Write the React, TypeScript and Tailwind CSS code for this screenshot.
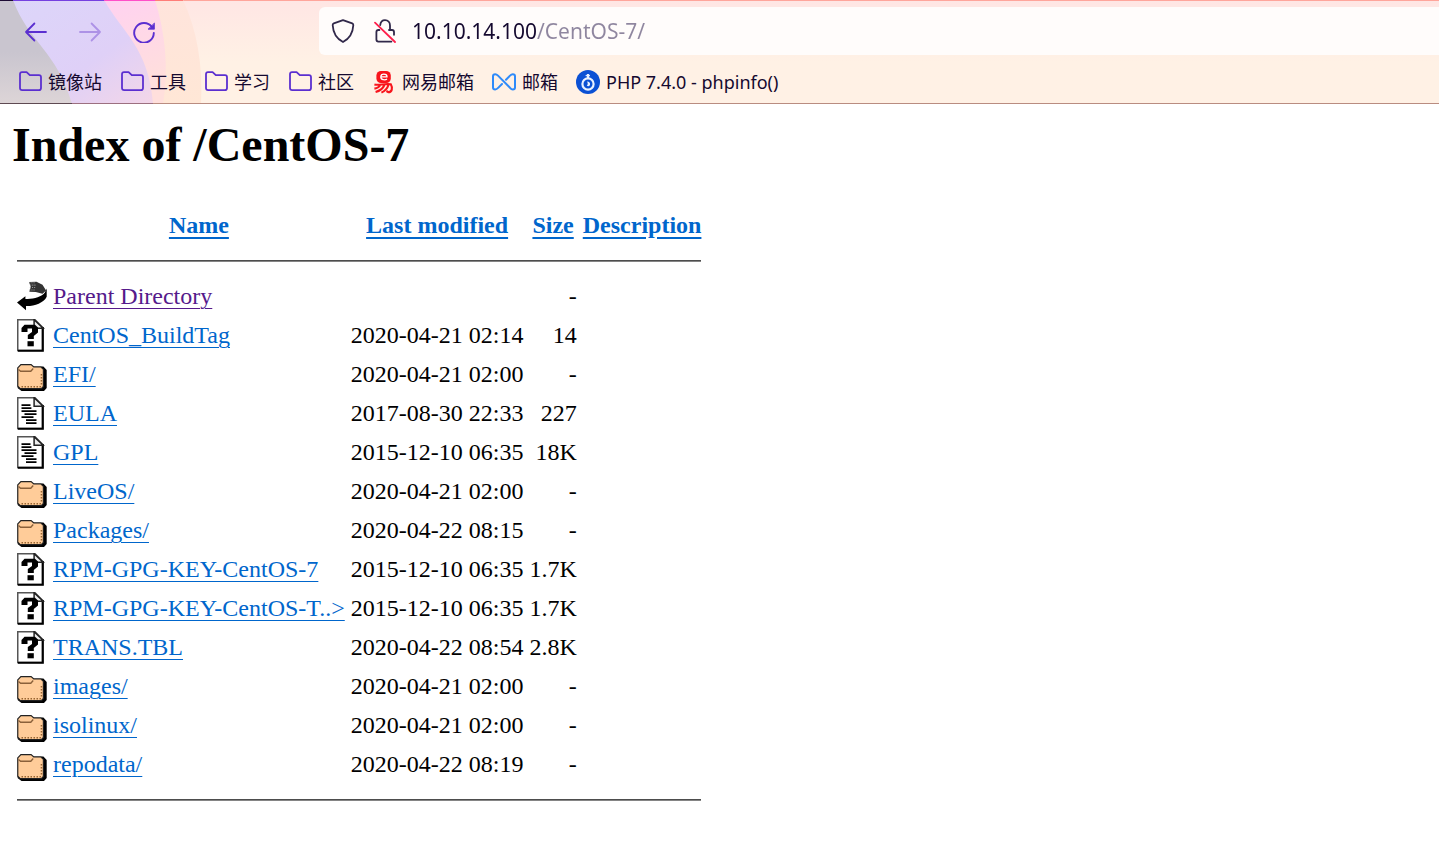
import React, { useState } from "react";

type Kind = "back" | "unknown" | "folder" | "text";

interface Entry {
  kind: Kind;
  name: string;
  modified: string;
  size: string;
}

const entries: Entry[] = [
  { kind: "back", name: "Parent Directory", modified: "", size: "-" },
  { kind: "unknown", name: "CentOS_BuildTag", modified: "2020-04-21 02:14", size: "14" },
  { kind: "folder", name: "EFI/", modified: "2020-04-21 02:00", size: "-" },
  { kind: "text", name: "EULA", modified: "2017-08-30 22:33", size: "227" },
  { kind: "text", name: "GPL", modified: "2015-12-10 06:35", size: "18K" },
  { kind: "folder", name: "LiveOS/", modified: "2020-04-21 02:00", size: "-" },
  { kind: "folder", name: "Packages/", modified: "2020-04-22 08:15", size: "-" },
  { kind: "unknown", name: "RPM-GPG-KEY-CentOS-7", modified: "2015-12-10 06:35", size: "1.7K" },
  { kind: "unknown", name: "RPM-GPG-KEY-CentOS-T..>", modified: "2015-12-10 06:35", size: "1.7K" },
  { kind: "unknown", name: "TRANS.TBL", modified: "2020-04-22 08:54", size: "2.8K" },
  { kind: "folder", name: "images/", modified: "2020-04-21 02:00", size: "-" },
  { kind: "folder", name: "isolinux/", modified: "2020-04-21 02:00", size: "-" },
  { kind: "folder", name: "repodata/", modified: "2020-04-22 08:19", size: "-" },
];

function Sheet({ children }: { children: React.ReactNode }) {
  return (
    <>
      <path d="M0.5 0.5H12L17 5.6V21H0.5Z" fill="#fff" stroke="#555" strokeWidth="1" />
      <path d="M0.6 21.2H17.2V5.4" fill="none" stroke="#000" strokeWidth="1.4" />
      <path d="M11.4 0.4V6.2H17.4Z" fill="#eee" stroke="#222" strokeWidth="1" />
      {children}
    </>
  );
}

function FileIcon({ kind }: { kind: Kind }) {
  return (
    <svg className="block h-[33px] w-[30px]" viewBox="0 0 20 22" aria-hidden="true">
      {kind === "unknown" && (
        <Sheet>
          <path d="M3 8.6V6L5 3.8H12L14 5.6V9L11.2 11.4V13.4H7.2V10.6L10 8.6V6.4H7V8.6Z" fill="#000" />
          <path d="M7 14.8H11.2V18.2H7Z" fill="#000" />
        </Sheet>
      )}
      {kind === "text" && (
        <Sheet>
          <path d="M3 5.4H9M3 7.4H9.6M3 9.4H13M5 11.4H13M3 13.4H11M6 15.4H13M6 17.4H13" stroke="#000" strokeWidth="1.2" />
        </Sheet>
      )}
      {kind === "folder" && (
        <>
          <path d="M2 5.6H17.6L19.8 8V20L18 22H3L0.4 20Z" fill="#000" />
          <path d="M0.5 6.6L2.6 4.4H9.4L11.2 6H16L17.6 7.6V19L16.2 20.4H2.2L0.5 18.8Z" fill="#ffcc99" stroke="#222" strokeWidth="0.8" />
          <path d="M1 7.6L2.4 8.8H9.2L10.8 7" fill="none" stroke="#8a603a" strokeWidth="0.9" />
          <path d="M3 19.1H16M16.3 10.6V18.6" fill="none" stroke="#996633" strokeWidth="1" strokeDasharray="1 1" />
        </>
      )}
      {kind === "back" && (
        <>
          <path d="M8 1.4L13 1.2L17 3.2L19.4 7L17 9.2L12.5 8L8.2 7.8L9.2 4.6Z" fill="#333" />
          <path d="M8.2 1.8H12M8.8 3.4H13M8.6 5H12.6M8.2 6.6H12" stroke="#999" strokeWidth="0.7" strokeDasharray="0.7 0.7" />
          <path d="M0 15L5.6 10.8V12.6C10.5 13 16.4 11.4 18.6 8.4L19.8 5.6V11.2C17.8 15.4 11.4 17.6 6 17.4V20.2Z" fill="#000" />
        </>
      )}
    </svg>
  );
}

function BookmarkFolder() {
  return (
    <svg className="h-6 w-6 shrink-0" viewBox="0 0 24 24" fill="none" stroke="#5b2fd0" strokeWidth="1.8" strokeLinejoin="round" aria-hidden="true">
      <path d="M2 4.2Q2 2.2 4 2.2H8.6L11.8 5.2H21Q23 5.2 23 7.2V18Q23 20.2 20.8 20.2H4.2Q2 20.2 2 18Z" />
    </svg>
  );
}

function NetEaseIcon() {
  return (
    <svg className="h-6 w-6 shrink-0" viewBox="0 0 24 24" fill="none" stroke="#f8141c" aria-hidden="true">
      <rect x="4.4" y="1" width="14.4" height="12" rx="4.6" fill="#f8141c" stroke="none" />
      <path d="M8.4 6.8H15C15 3.4 8.8 3.2 8.8 7C8.8 10.2 13.4 10.4 15 9" stroke="#fff" strokeWidth="1.3" />
      <path d="M2.4 14.4C7 15.8 12 13.2 18.8 14.2C21 18 20 22.2 16.4 22.2L14.4 21M8.4 14.6C7.4 17 5.2 18.2 2.4 18.6M12.4 15C11 18.4 8 20.8 3.6 22M16.4 15C15.4 18.4 13 21 9.4 22.6" strokeWidth="2.1" />
    </svg>
  );
}

function MailIcon() {
  return (
    <svg className="h-6 w-6 shrink-0" viewBox="0 0 24 24" fill="none" stroke="#2f8bfa" strokeWidth="2" strokeLinejoin="round" strokeLinecap="round" aria-hidden="true">
      <path d="M10 14L6.4 17.6Q4.6 19.4 3.2 19.4Q1 19.4 1 17.4V6.2Q1 4.2 3.2 4.2Q4.6 4.2 6 5.6L18 17.8Q19.4 19.4 20.8 19.4Q23 19.4 23 17.4V6.2Q23 4.2 20.8 4.2Q19.4 4.2 18 5.6L14 9.8" />
    </svg>
  );
}

function PhpSiteIcon() {
  return (
    <svg className="h-6 w-6 shrink-0" viewBox="0 0 24 24" fill="none" aria-hidden="true">
      <circle cx="12" cy="12" r="12" fill="#0b50d4" />
      <circle cx="12" cy="14" r="5.6" stroke="#e8f0ff" strokeWidth="2.2" />
      <path d="M12 4V9" stroke="#e8f0ff" strokeWidth="2.4" />
      <path d="M9.6 5.6H14" stroke="#e8f0ff" strokeWidth="1" />
      <path d="M11 11.6Q14.6 12 14 15Q12.6 17 10.8 15.6Q12.6 14 11 11.6Z" fill="#e8f0ff" />
    </svg>
  );
}

const bookmarks = [
  { label: "镜像站", icon: <BookmarkFolder /> },
  { label: "工具", icon: <BookmarkFolder /> },
  { label: "学习", icon: <BookmarkFolder /> },
  { label: "社区", icon: <BookmarkFolder /> },
  { label: "网易邮箱", icon: <NetEaseIcon /> },
  { label: "邮箱", icon: <MailIcon /> },
  { label: "PHP 7.4.0 - phpinfo()", icon: <PhpSiteIcon /> },
];

function ThemeArt() {
  return (
    <svg className="absolute top-0 left-0 h-[104px] w-[210px]" viewBox="0 0 210 104" aria-hidden="true">
      <defs>
        <linearGradient id="peach" x1="0" y1="0" x2="0" y2="1">
          <stop offset="0" stopColor="#ffe4dc" />
          <stop offset="1" stopColor="#ffe7d6" />
        </linearGradient>
        <linearGradient id="pink" x1="0" y1="0" x2="0.5" y2="1">
          <stop offset="0" stopColor="#ffcdf8" />
          <stop offset="1" stopColor="#ffdfdc" />
        </linearGradient>
        <linearGradient id="violet" x1="0" y1="0" x2="1" y2="1">
          <stop offset="0" stopColor="#dcd6fa" />
          <stop offset="0.6" stopColor="#dfd0f7" />
          <stop offset="1" stopColor="#f3d6e8" />
        </linearGradient>
        <linearGradient id="gray" x1="0" y1="0" x2="0" y2="1">
          <stop offset="0.5" stopColor="#c9c5cf" />
          <stop offset="1" stopColor="#ddd5d7" />
        </linearGradient>
      </defs>
      <path d="M0 0H183C197 30 203 65 201 104H0Z" fill="url(#peach)" />
      <path d="M0 0H155C165 32 169 68 163 104H0Z" fill="url(#pink)" />
      <path d="M0 0H104C122 32 149 48 153 104H0Z" fill="url(#violet)" />
      <path d="M0 0H13C29 43 57 51 72 104H0Z" fill="url(#gray)" />
      <path d="M0 0.5H13" stroke="#1d0b35" />
      <path d="M13 0.5H104" stroke="#7540e0" />
      <path d="M104 0.5H155" stroke="#ff4fc8" />
      <path d="M155 0.5H183" stroke="#ff7d78" />
      <path d="M0 103.5H72" stroke="#5e4a52" />
      <path d="M72 103.5H153" stroke="#9c7080" />
      <path d="M153 103.5H210" stroke="#b98c80" />
    </svg>
  );
}

function Toolbar() {
  const [address, setAddress] = useState("10.10.14.100/CentOS-7/");
  return (
    <header className="relative border-t border-b border-t-[#ffa59b] border-b-[#b98c80] bg-linear-to-b from-[#ffe6e4] to-[#fff1e5] to-60% font-['Noto_Sans','Noto_Sans_CJK_SC',sans-serif] text-[#15092f]">
      <div className="absolute -top-px left-0">
        <ThemeArt />
      </div>
      <div className="relative flex pt-1.5">
        <nav className="flex w-[319px] shrink-0 items-center gap-[30px] pl-6" aria-label="History">
          <button type="button" aria-label="Back">
            <svg className="h-6 w-6" viewBox="0 0 24 24" fill="none" stroke="#5b2fd0" strokeWidth="1.8" strokeLinecap="round" strokeLinejoin="round">
              <path d="M22 13H2M10.4 4.5L2 13L10.4 21.5" />
            </svg>
          </button>
          <button type="button" aria-label="Forward">
            <svg className="h-6 w-6" viewBox="0 0 24 24" fill="none" stroke="#ad92e6" strokeWidth="1.8" strokeLinecap="round" strokeLinejoin="round">
              <path d="M2 13H22M13.6 4.5L22 13L13.6 21.5" />
            </svg>
          </button>
          <button type="button" aria-label="Reload">
            <svg className="h-6 w-6" viewBox="0 0 24 24" fill="none" stroke="#5b2fd0" strokeWidth="1.9" strokeLinecap="round">
              <path d="M20 8.2A9.8 9.8 0 1 0 21.8 14" />
              <path d="M22.4 4.4V10.2H16.4Z" fill="#5b2fd0" strokeWidth="0.8" strokeLinejoin="round" />
            </svg>
          </button>
        </nav>
        <div className="flex h-12 min-w-0 flex-1 items-center rounded-l-md bg-[#fffcfb] pl-3">
          <svg className="h-6 w-6 shrink-0" viewBox="0 0 24 24" fill="none" stroke="#31284a" strokeWidth="1.8" strokeLinejoin="round" aria-hidden="true">
            <path d="M12 1.2L21.2 4.4Q22.4 4.9 22.3 6.2C21.9 14 18.4 19.6 12 23C5.6 19.6 2.1 14 1.7 6.2Q1.6 4.9 2.8 4.4Z" />
          </svg>
          <svg className="ml-[18px] h-6 w-6 shrink-0" viewBox="0 0 24 24" fill="none" stroke="#31284a" strokeWidth="1.8" strokeLinecap="round" aria-hidden="true">
            <path d="M7.2 6.2C7.6 3 9.4 1.2 12 1.2C15 1.2 17 3.4 17 6.6V10.4M16 11H19Q21 11 21 13V15.8M6.4 11H5.4Q3.4 11 3.4 13V20.6Q3.4 22.6 5.4 22.6H18.4" />
            <path d="M2 3.6L22 23" stroke="#ff1f4b" />
          </svg>
          <input
            aria-label="Address"
            className="ml-[15px] min-w-0 flex-1 bg-linear-to-r from-[#15092f] from-[125px] to-[#8f869f] to-[125px] bg-clip-text text-[21px] leading-8 text-transparent caret-[#15092f] outline-none"
            value={address}
            onChange={(e) => setAddress(e.target.value)}
            spellCheck={false}
          />
        </div>
      </div>
      <nav className="relative flex h-12 items-center gap-[18px] pt-1.5 pl-[18px] text-lg" aria-label="Bookmarks">
        {bookmarks.map((b) => (
          <a key={b.label} href="#" className="flex shrink-0 items-center gap-1.5">
            {b.icon}
            <span className="whitespace-nowrap">{b.label}</span>
          </a>
        ))}
      </nav>
    </header>
  );
}

const linkClass = "text-[#0066cc] underline decoration-1 underline-offset-4";
const headLinkClass = "text-[#0066cc] underline decoration-2 underline-offset-4";

function Rule() {
  return (
    <tr>
      <td colSpan={5} className="px-[3px] py-[15px]">
        <hr className="h-0.5 border-t border-b border-t-[#4d4d4d] border-b-[#858585]" />
      </td>
    </tr>
  );
}

export default function App() {
  return (
    <div className="min-h-screen bg-white">
      <Toolbar />
      <main className="px-3 pt-3.5 font-['Liberation_Serif',serif] text-2xl leading-[27px] text-black">
        <h1 className="text-5xl leading-[54px] font-bold">Index of /CentOS-7</h1>
        <table className="mt-10 ml-0.5 border-collapse">
          <thead>
            <tr className="h-[33px] align-top font-bold">
              <td className="px-[3px]" />
              <th className="px-[3px]"><a href="#" className={headLinkClass}>Name</a></th>
              <th className="px-[3px]"><a href="#" className={headLinkClass}>Last modified</a></th>
              <th className="px-[3px]"><a href="#" className={headLinkClass}>Size</a></th>
              <th className="px-[3px]"><a href="#" className={headLinkClass}>Description</a></th>
            </tr>
          </thead>
          <tbody>
            <Rule />
            {entries.map((e) => (
              <tr key={e.name} className="h-[39px]">
                <td className="px-[3px]"><FileIcon kind={e.kind} /></td>
                <td className="px-[3px] whitespace-nowrap">
                  <a
                    href="#"
                    className={e.kind === "back" ? "text-[#551a8b] underline decoration-1 underline-offset-4" : linkClass}
                  >
                    {e.name}
                  </a>
                </td>
                <td className="px-[3px] text-right whitespace-nowrap">{e.modified}</td>
                <td className="px-[3px] text-right">{e.size}</td>
                <td className="px-[3px]" />
              </tr>
            ))}
            <Rule />
          </tbody>
        </table>
      </main>
    </div>
  );
}
